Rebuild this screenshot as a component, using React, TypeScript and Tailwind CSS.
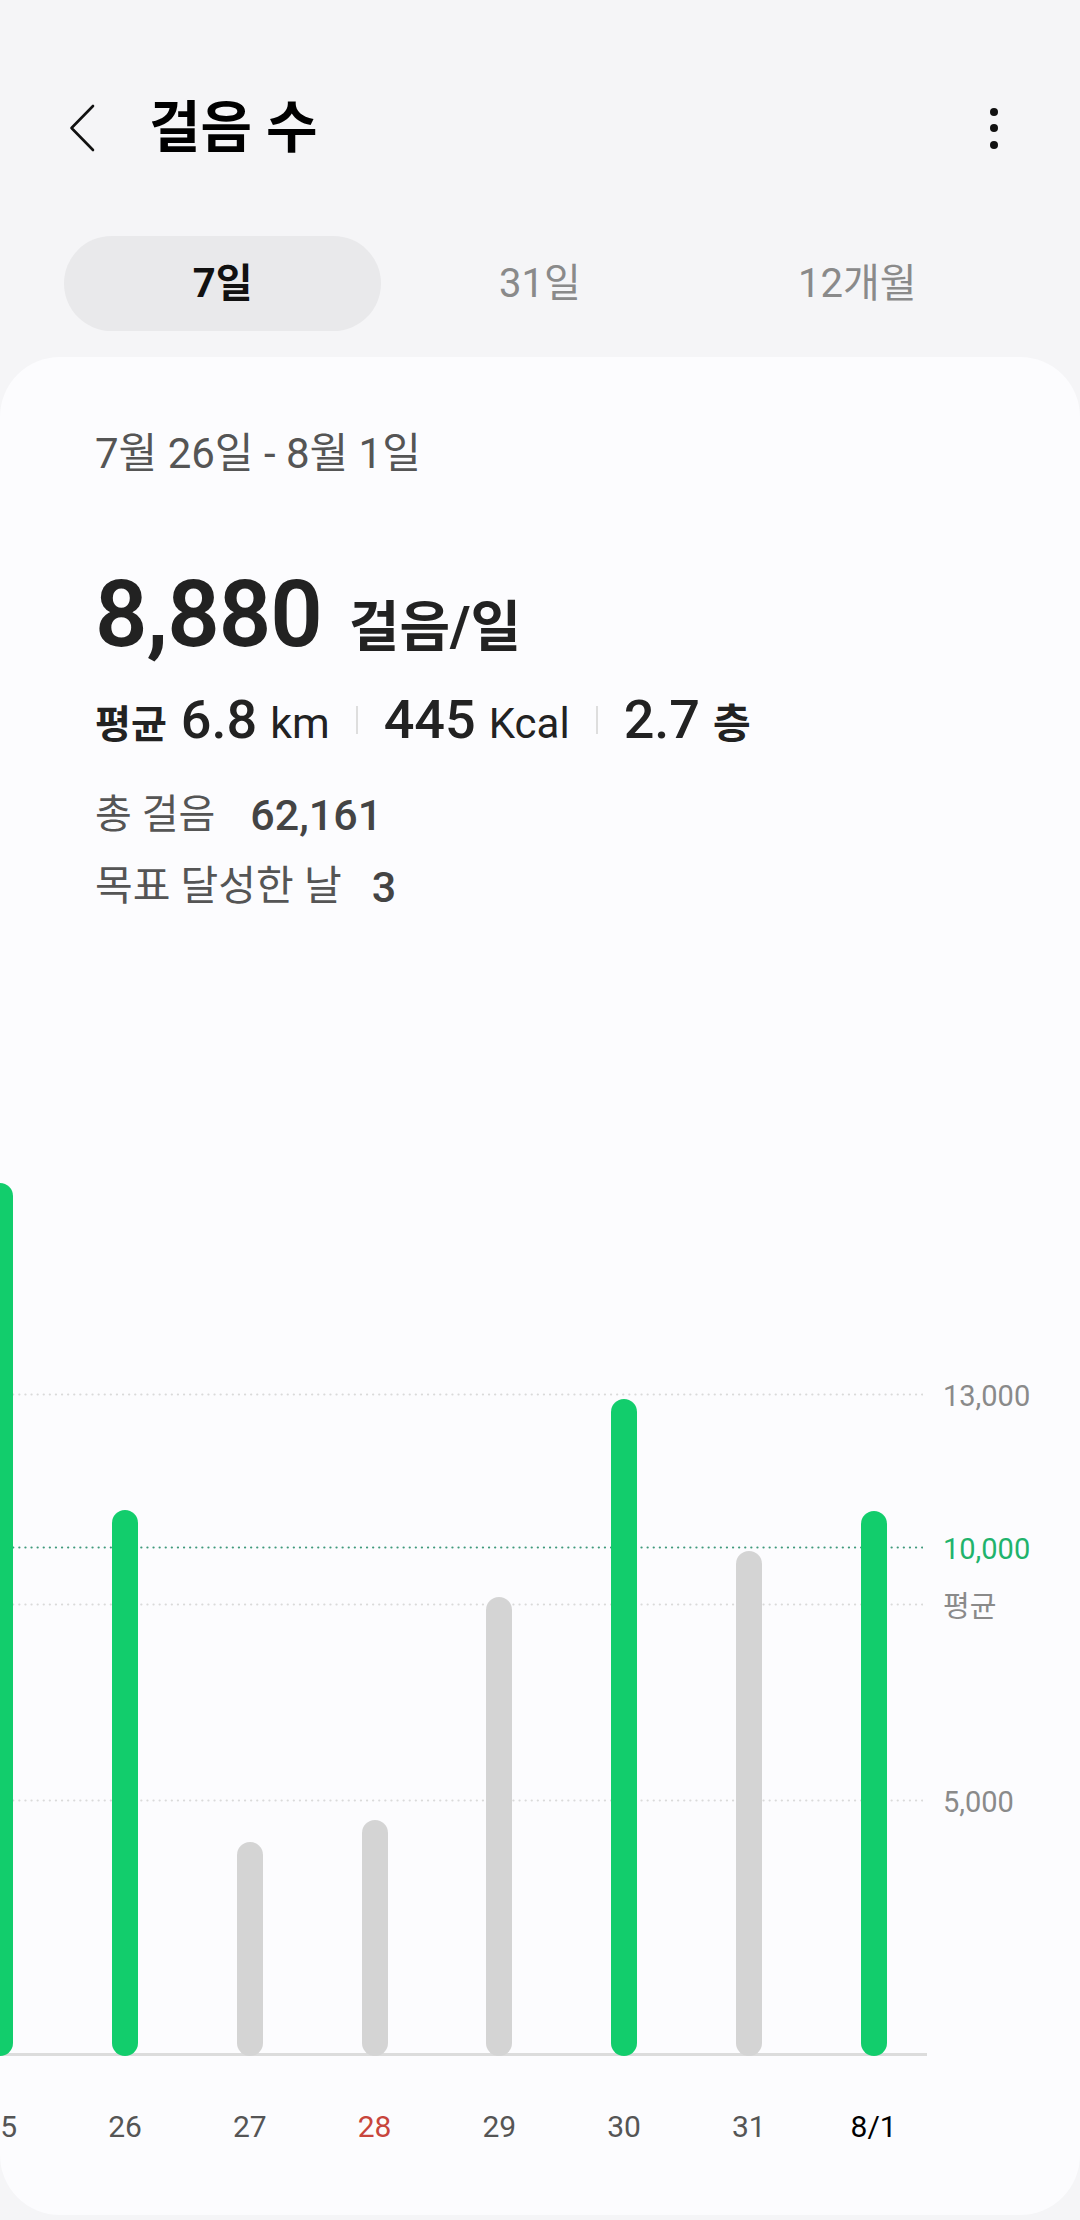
import React from "react";

const days = [
  { label: "25", h: 873, goal: true, tone: "text-[#555]" },
  { label: "26", h: 546, goal: true, tone: "text-[#555]" },
  { label: "27", h: 214, goal: false, tone: "text-[#555]" },
  { label: "28", h: 236, goal: false, tone: "text-[#c8453c]" },
  { label: "29", h: 459, goal: false, tone: "text-[#555]" },
  { label: "30", h: 657, goal: true, tone: "text-[#555]" },
  { label: "31", h: 505, goal: false, tone: "text-[#555]" },
  { label: "8/1", h: 545, goal: true, tone: "text-black" },
];

const GridLine = ({ top, color, gap = 6 }: { top: number; color: string; gap?: number }) => (
  <svg className="absolute left-0" style={{ top: top - 1 }} width="923" height="3">
    <line x1="1" y1="1.5" x2="923" y2="1.5" stroke={color} strokeWidth="2.2" strokeLinecap="round" strokeDasharray={`0.1 ${gap}`} />
  </svg>
);

const AxisLabel = ({ top, children, className }: { top: number; children: React.ReactNode; className: string }) => (
  <div className={`absolute left-[943px] -translate-y-1/2 text-[29px] leading-none ${className}`} style={{ top }}>
    {children}
  </div>
);

const Sep = () => <div className="mx-[26px] h-[28px] w-[2px] self-center bg-[#dedede]" />;

export default function App() {
  return (
    <div className="w-[1080px] h-[2220px] overflow-hidden bg-[#f5f5f7] font-['Roboto','Noto_Sans_CJK_KR',sans-serif]">
      {/* header */}
      <div className="pt-[80px]">
        <div className="flex h-[96px] items-center">
          <svg className="ml-[69px]" width="26" height="48" viewBox="0 0 26 48" fill="none">
            <path d="M24 2 L2.5 24 L24 46" stroke="#111" strokeWidth="2.6" strokeLinecap="round" strokeLinejoin="round" />
          </svg>
          <h1 className="ml-[54px] text-[56px] font-bold leading-none text-black">걸음 수</h1>
          <div className="ml-auto mr-[82px] flex flex-col gap-[8.5px]">
            <span className="block h-[8px] w-[8px] rounded-full bg-[#111]" />
            <span className="block h-[8px] w-[8px] rounded-full bg-[#111]" />
            <span className="block h-[8px] w-[8px] rounded-full bg-[#111]" />
          </div>
        </div>
      </div>

      {/* period tabs */}
      <div className="mt-[60px] grid grid-cols-3 px-[64px]">
        <div className="flex h-[95px] items-center justify-center rounded-full bg-[#e9e9eb] text-[40px] font-bold text-[#111]">7일</div>
        <div className="flex h-[95px] items-center justify-center text-[40px] text-[#8a8a8a]">31일</div>
        <div className="flex h-[95px] items-center justify-center text-[40px] text-[#8a8a8a]">12개월</div>
      </div>

      {/* card */}
      <div className="mt-[26px] h-[1858px] rounded-[60px] bg-[#fcfcfe]">
        <div className="px-[95px] pt-[73px]">
          <div className="text-[42px] leading-[48px] text-[#555]">7월 26일 - 8월 1일</div>

          <div className="mt-[91px] flex items-baseline">
            <span className="text-[92px] font-semibold leading-none tracking-[-1px] text-[#222]">8,880</span>
            <span className="ml-[27px] text-[55px] font-bold leading-none text-[#222]">걸음/일</span>
          </div>

          <div className="mt-[32px] flex h-[54px] items-baseline text-[#222]">
            <span className="text-[39px] font-bold leading-none">평균</span>
            <span className="ml-[14px] text-[54px] font-medium leading-none">6.8</span>
            <span className="ml-[13px] text-[43px] leading-none">km</span>
            <Sep />
            <span className="text-[54px] font-medium leading-none">445</span>
            <span className="ml-[13px] text-[42px] leading-none">Kcal</span>
            <Sep />
            <span className="text-[54px] font-medium leading-none">2.7</span>
            <span className="ml-[13px] text-[41px] font-bold leading-none">층</span>
          </div>

          <div className="mt-[44px] flex h-[48px] items-center">
            <span className="text-[40px] text-[#555]">총 걸음</span>
            <span className="ml-[35px] text-[43px] font-medium text-[#444]">62,161</span>
          </div>
          <div className="mt-[24px] flex h-[48px] items-center">
            <span className="text-[41px] text-[#555]">목표 달성한 날</span>
            <span className="ml-[30px] text-[43px] font-medium text-[#444]">3</span>
          </div>
        </div>

        {/* chart */}
        <div className="relative mt-[239px] h-[906px]">
          <GridLine top={244} color="#dadada" />
          <GridLine top={397} color="#3f9a7c" />
          <GridLine top={454} color="#dadada" />
          <GridLine top={650} color="#dadada" />
          <div className="absolute bottom-0 left-0 h-[3px] w-[927px] bg-[#dcdcdc]" />

          <AxisLabel top={246} className="text-[#8a8a8a]">13,000</AxisLabel>
          <AxisLabel top={399} className="text-[#1fb36c]">10,000</AxisLabel>
          <AxisLabel top={457} className="text-[27px] text-[#8a8a8a]">평균</AxisLabel>
          <AxisLabel top={652} className="text-[#8a8a8a]">5,000</AxisLabel>

          <div className="relative -ml-[62px] flex h-full items-end">
            {days.map((d) => (
              <div key={d.label} className="flex w-[124.75px] shrink-0 justify-center">
                <div
                  className={`w-[26px] rounded-full ${d.goal ? "bg-[#12cd6c]" : "bg-[#d4d4d4]"}`}
                  style={{ height: d.h }}
                />
              </div>
            ))}
          </div>
        </div>

        <div className="-ml-[62px] mt-[51px] flex">
          {days.map((d) => (
            <div key={d.label} className={`flex w-[124.75px] shrink-0 justify-center text-[30px] leading-[40px] ${d.tone}`}>
              {d.label}
            </div>
          ))}
        </div>
      </div>
    </div>
  );
}
